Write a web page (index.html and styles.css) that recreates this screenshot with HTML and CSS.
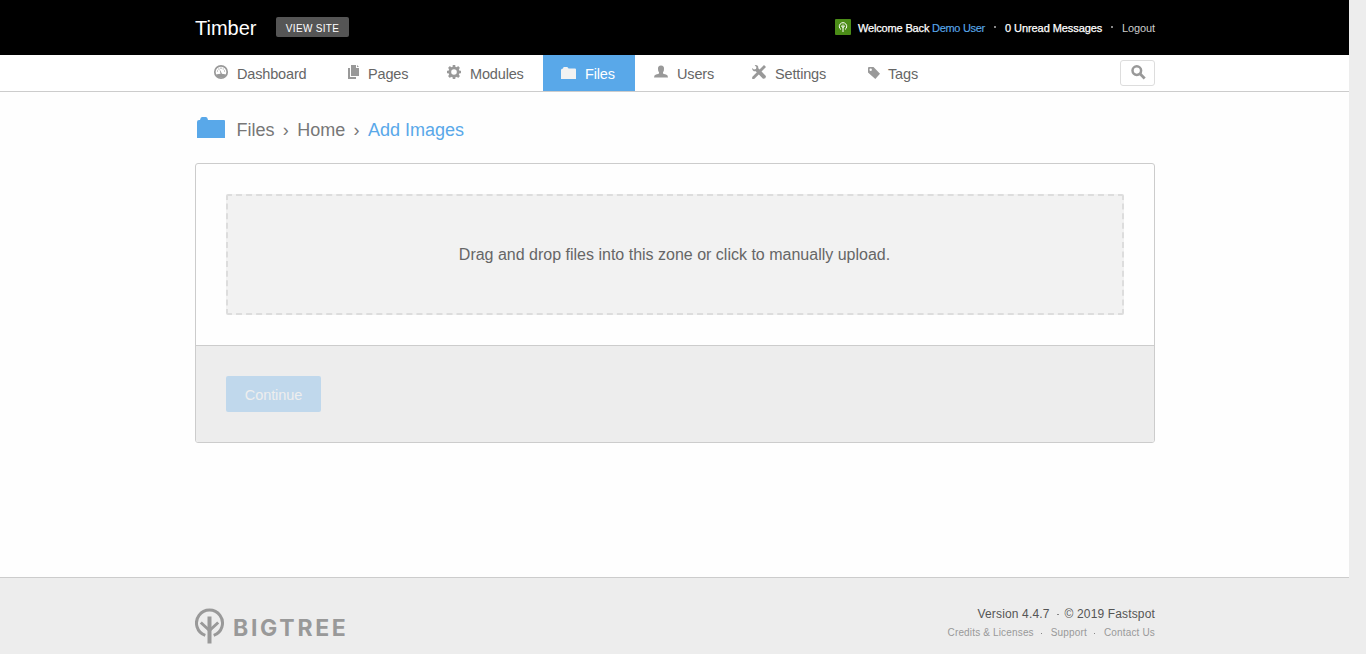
FILE: index.html
```html
<!DOCTYPE html>
<html lang="en">
<head>
<meta charset="utf-8">
<title>Add Images</title>
<link rel="stylesheet" href="styles.css">
</head>
<body>
<div class="page">
  <header class="header wrap">
    <a class="site-title">Timber</a>
    <a class="view-site">VIEW SITE</a>
    <div class="user">
      <svg class="avatar" width="16" height="16" viewBox="0 0 16 16"><rect width="16" height="16" rx="1" fill="#4b8c17"/><path d="M6 10.500A3.700 3.700 0 1 1 10 10.500M8 5.500V13M6 6.700L8 8.500L10 6.700" fill="none" stroke="#fff" stroke-width="1"/></svg>
      <span class="welcome">Welcome Back</span>
      <a class="user-link">Demo User</a>
      <i class="dot"></i>
      <span class="unread">0 Unread Messages</span>
      <i class="dot"></i>
      <a class="logout">Logout</a>
    </div>
  </header>
  <nav class="nav wrap">
    <a class="item w-dashboard"><svg class="icon" viewBox="0 0 18 18"><circle cx="9" cy="9" r="6.200" fill="none" stroke="#999" stroke-width="1.700"/><path d="M4 11.500Q9 9.800 14 11.500L12 14.500H6zM7.500 6L10 10.800H8.500zM5 7.500h1v1H5zM8.500 4.500h1V6h-1zM12 7.500h1v1h-1zM6.300 5.500h1v1h-1zM10.700 5.500h1v1h-1z"/></svg>Dashboard</a>
    <a class="item w-pages"><svg class="icon" viewBox="0 0 18 18"><path d="M3 5h2v9h6v2H3zM6 2h5v3h3v8H6zM12 2l2 2h-2z"/></svg>Pages</a>
    <a class="item w-modules"><svg class="icon" viewBox="0 0 18 18"><circle cx="9" cy="9" r="4.200" fill="none" stroke="#999" stroke-width="2.800"/><path d="M7.700 2h2.600v2.500H7.700zM7.700 13.500h2.600V16H7.700zM2 7.700h2.500v2.600H2zM13.500 7.700H16v2.600h-2.500zM3 4.900L4.900 3l1.800 1.800-1.900 1.900zM13.100 3L15 4.900l-1.800 1.800-1.900-1.900zM3 13.100L4.900 15l1.800-1.800-1.900-1.900zM13.100 15l1.900-1.900-1.800-1.800-1.900 1.900z"/></svg>Modules</a>
    <a class="item active w-files"><svg class="icon" viewBox="0 0 18 18"><path d="M1 6q0-1.500 2-1.500Q3 3 4 3h3q1 0 1.500 1.500H15q1 0 1 1V15H1z"/></svg>Files</a>
    <a class="item w-users"><svg class="icon" viewBox="0 0 18 18"><path d="M6 6Q5.700 2.500 9 2.500T12 6Q12 8.300 11 9.300V10.500Q11.500 11 14 11.500Q16 12 16 14.500H2Q2 12 4 11.500Q6.500 11 7 10.500V9.300Q6 8.300 6 6z"/></svg>Users</a>
    <a class="item w-settings"><svg class="icon" viewBox="0 0 18 18"><path d="M14 2L16 4L10.500 9.500L8.500 7.500zM2.200 14L6.800 9.200L9 11.200L4.200 16L2.200 16zM4.600 2.200Q8.500 1.500 8.300 5.200L15.900 12.900Q16.300 15.900 13 15.700L5.700 8.300Q2.500 8.800 2 5L4 6.500L6 6L6.400 4z"/></svg>Settings</a>
    <a class="item w-tags"><svg class="icon" viewBox="0 0 18 18"><path fill-rule="evenodd" d="M3 4q0-1 1-1h4.500L15 9.800L10.300 15L3 8.500zM5.700 4.500a1.200 1.200 0 1 0 0 2.400a1.200 1.200 0 0 0 0-2.400z"/></svg>Tags</a>
    <a class="search"><svg width="16" height="16" viewBox="0 0 16 16"><circle cx="5.800" cy="5.600" r="4.300" fill="none" stroke="#999" stroke-width="2.500"/><path d="M9 8.800L13.700 13.500" stroke="#999" stroke-width="2.800"/></svg></a>
  </nav>
  <main class="main wrap">
    <h1 class="crumbs">
      <svg class="folder" width="28" height="21" viewBox="0 0 28 21"><path d="M0 5q0-2 2-2h1Q3.500 0 5 0h4q1.500 0 2 3h16q1 0 1 1v17H0z" fill="#59a8e9"/></svg>
      <a>Files</a><span class="sep">›</span><a>Home</a><span class="sep">›</span><a class="current">Add Images</a>
    </h1>
    <section class="panel">
      <div class="panel-body"><div class="dropzone">Drag and drop files into this zone or click to manually upload.</div></div>
      <footer class="panel-foot"><button class="continue">Continue</button></footer>
    </section>
  </main>
  <footer class="footer wrap">
    <a class="logo">
      <svg width="30" height="36" viewBox="0 0 30 36"><path d="M10.300 27.400A13 13 0 1 1 18.700 27.400M5.800 14.500L14.500 22.500L23.200 14.500" fill="none" stroke="#999" stroke-width="3"/><path d="M14.500 8.500V35.500" stroke="#999" stroke-width="4"/></svg>
      <span class="logo-text">BIGTREE</span>
    </a>
    <div class="legal">
      <div class="version"><span>Version 4.4.7</span><i class="dot"></i><span>© 2019 Fastspot</span></div>
      <div class="links"><a>Credits &amp; Licenses</a><i class="dot"></i><a>Support</a><i class="dot"></i><a>Contact Us</a></div>
    </div>
  </footer>
</div>
</body>
</html>
```
FILE: styles.css
```css
* { box-sizing: border-box; }
body { margin: 0; background: #ededed; font-family: "Liberation Sans", Arial, sans-serif; overflow: hidden; }
.page { width: 1349px; height: 654px; display: flex; flex-direction: column; background: #fefefe; }
.wrap { padding-left: 195px; padding-right: 194px; }
.header { height: 55px; background: #000; display: flex; align-items: center; }
.site-title { font-size: 20px; line-height: 24px; color: #fff; width: 81px; padding-top: 1px; }
.view-site { width: 73px; height: 20px; line-height: 23px; margin-top: -1px; border-radius: 2px; background: #555; color: #fff; font-size: 10px; letter-spacing: .3px; text-align: center; }
.user { margin-left: auto; display: flex; align-items: center; font-size: 11px; line-height: 16px; color: #fff; white-space: nowrap; }
.avatar { margin-right: 7px; margin-top: -1px; }
.welcome { width: 74px; letter-spacing: -.16px; -webkit-text-stroke: .25px #fff; }
.user-link { width: 54px; letter-spacing: -.3px; color: #59a8e9; -webkit-text-stroke: .15px #59a8e9; }
.unread { width: 98px; letter-spacing: -.07px; -webkit-text-stroke: .25px #fff; }
.dot { width: 2px; height: 2px; background: #888; }
.user .dot { margin: -1px 9px 0 8px; }
.logout { width: 33px; letter-spacing: -.1px; color: #ccc; }
.nav { height: 37px; border-bottom: 1px solid #ccc; background: #fff; display: flex; align-items: flex-start; }
.item { display: flex; height: 36px; padding-left: 17px; line-height: 38px; font-size: 14.500px; letter-spacing: -.16px; color: #666; white-space: nowrap; }
.icon { width: 18px; height: 18px; margin: 8px 7px 0 0; fill: #999; }
.w-dashboard { width: 132px; }
.w-pages { width: 100px; padding-left: 18px; }
.w-pages .icon { margin-right: 5px; }
.w-modules { width: 116px; padding-left: 18px; }
.w-files { width: 92px; }
.w-users { width: 98px; }
.w-settings { width: 113px; }
.w-tags { width: 100px; padding-left: 19px; }
.w-tags .icon { margin-top: 9px; margin-right: 5px; }
.active { background: #59a8e9; color: #fff; }
.active .icon { margin-top: 9px; fill: #f2f2f2; }
.search { width: 35px; height: 26px; margin: 5px 0 0 auto; border: 1px solid #ddd; border-radius: 3px; display: flex; padding: 4px 0 0 10px; }
.main { flex: 1; }
.crumbs { display: flex; height: 71px; margin: 0; font-weight: normal; font-size: 18px; line-height: 76px; color: #777; }
.folder { margin: 25px 11.500px 0 2px; }
.sep { width: 22.700px; text-align: center; }
.current { color: #59a8e9; }
.panel { height: 280px; border: 1px solid #ccc; border-radius: 3px; overflow: hidden; background: #fefefe; }
.panel-body { height: 182px; padding: 30px; border-bottom: 1px solid #ccc; }
.dropzone { height: 121px; border: 2px dashed #ddd; border-radius: 2px; background: #f2f2f2; color: #666; font-size: 16px; line-height: 117px; padding-right: 1px; text-align: center; }
.panel-foot { height: 97px; padding: 30px; background: #ededed; }
.continue { display: block; width: 95px; height: 36px; padding: 2px 0 0; border: 0; border-radius: 2px; background: #c0d8ec; color: #eee; font: 14.500px "Liberation Sans", Arial, sans-serif; letter-spacing: -.08px; }
.footer { height: 77px; border-top: 1px solid #ccc; background: #ededed; display: flex; justify-content: space-between; }
.logo { display: flex; margin-top: 30px; color: #999; }
.logo-text { margin-left: 8px; font: 700 23px/40px Inter, sans-serif; letter-spacing: 2.700px; }
.legal { padding-top: 28px; }
.version, .links { display: flex; justify-content: flex-end; align-items: center; white-space: nowrap; }
.version { font-size: 12px; letter-spacing: .15px; line-height: 16px; color: #555; }
.links { font-size: 10px; letter-spacing: .16px; line-height: 22px; color: #999; }
.version .dot { margin: 0 6px 0 7px; }
.links .dot { margin: 0 9px 0 7px; width: 1px; }
.legal .dot { height: 1px; }
```
